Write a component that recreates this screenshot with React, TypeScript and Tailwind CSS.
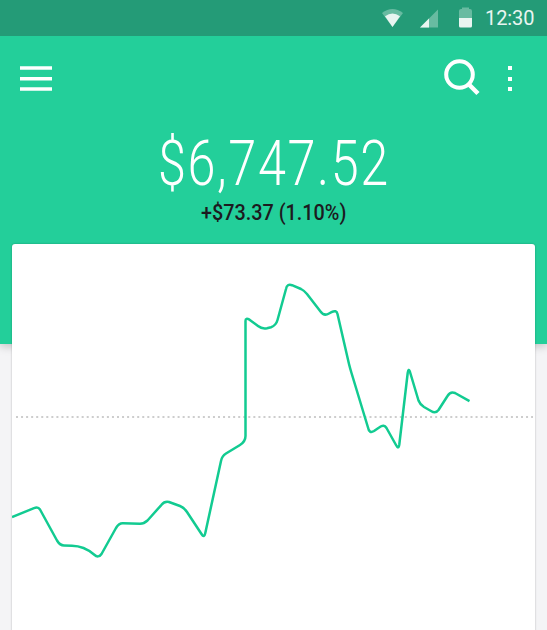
function StatusBar() {
  return (
    <div className="flex h-9 items-center justify-end bg-[#249b77] pr-[11px] text-[#e9f5f1]">
      <svg className="h-9 w-[104px]" viewBox="382 0 104 36" fill="currentColor">
        <path d="M382 13Q392.500 5 403 13L392.500 27Z" opacity=".35" />
        <path d="M385 16.300Q392.500 10.500 400 16.300L392.500 27Z" />
        <path d="M438 9.500V27.500H420Z" opacity=".35" />
        <path d="M429 18.500V27.500H420Z" />
        <path d="M459 18V11Q459 9 461 9H462V7.500H469V9H470Q472 9 472 11V18Z" opacity=".35" />
        <path d="M459 18H472V26Q472 27.500 470.500 27.500H460.500Q459 27.500 459 26Z" />
      </svg>
      <span className="-ml-px w-[51px] text-[20px] leading-9 tracking-[-0.1px]">12:30</span>
    </div>
  )
}

function Toolbar() {
  return (
    <div className="flex h-[84px] items-center justify-between pr-[34px] pl-5 text-white">
      <button className="block" aria-label="Menu">
        <svg className="h-[84px] w-8" viewBox="20 36 32 84" fill="currentColor">
          <path d="M20 66.300h32v3.500h-32zM20 77h32v3.500h-32zM20 87.200h32v3.500h-32z" />
        </svg>
      </button>
      <svg className="h-[84px] w-[73px]" viewBox="440 36 73 84" fill="none" stroke="currentColor" strokeWidth="4">
        <circle cx="459.500" cy="74.500" r="13.300" />
        <path d="M468.500 84L478 93.500" strokeWidth="4.500" />
        <path d="M508 66h4v4h-4zM508 77h4v4h-4zM508 87h4v4h-4z" fill="currentColor" stroke="none" />
      </svg>
    </div>
  )
}

function Balance() {
  return (
    <div className="flex flex-col items-center">
      <div className="flex h-[83px] w-[240px] justify-center pt-[2px]">
        <span className="origin-center scale-x-[0.8] text-[63px] leading-[84px] font-light tracking-[2px] whitespace-nowrap text-white">
          $6,747.52
        </span>
      </div>
      <span className="scale-x-[0.9] text-[22px] leading-[20px] font-medium text-[#1c1a20]">
        +$73.37 (1.10%)
      </span>
    </div>
  )
}

function PriceChart() {
  return (
    <svg className="block h-[386px] w-[523px]" viewBox="12 244 523 386" fill="none">
      <path d="M16 417H533" stroke="#cdcdcd" strokeWidth="2" strokeDasharray="2 3.05" />
      <path
        d="M12 517L34 508.200Q38 506.500 40 509.500L57 540.500Q60 545.500 64 545.500L72 545.800Q84 546 94 554.500Q98.500 558.500 101.500 554L116 528Q119 523 123 523.200L140 523.700Q144 523.700 147.500 520.500L161.500 504.800Q164.500 501 169 502L180 506Q184 507.500 187 512L201.500 534Q204.200 538.500 205.300 533L221 461Q222 456 226 453.500L240 445Q245.500 441.500 245.500 436V321Q245.500 317.500 249.500 319.700L258 326Q262 329.200 267 328.200L271 327.200Q276 325.500 277.500 320L286 289Q287 283.500 292 285.200L301 289Q304 290.500 307 294L320.500 311.500Q324 316.500 329 313.500L331.500 312.200Q336.500 309.500 337.500 314L349 364Q350 368 351.500 373L368 427.500Q369.200 434 374 431L379.500 427.300Q384 424 386.500 428L396 445Q398.500 450 399.300 444.500L407.700 373Q408.500 367.500 410 372L418.500 400.500Q420 404.500 424 407L431 411Q435.500 414 438.500 410L447.500 396Q450.500 391 455 393L469.500 401.200"
        stroke="#12cb91"
        strokeWidth="2.500"
        strokeLinejoin="round"
      />
    </svg>
  )
}

export default function App() {
  return (
    <div className="h-[630px] w-[547px] overflow-hidden bg-[#f4f4f6] font-['Roboto','Liberation_Sans',sans-serif]">
      <header className="h-[344px] bg-[#23cf9a] shadow-[0_2px_9px_rgba(0,0,0,0.22)]">
        <StatusBar />
        <Toolbar />
        <Balance />
      </header>
      <main className="relative mx-3 -mt-[100px] h-[400px] rounded-[3px] bg-white shadow-[0_0_2px_rgba(0,0,0,0.3)]">
        <PriceChart />
      </main>
    </div>
  )
}
